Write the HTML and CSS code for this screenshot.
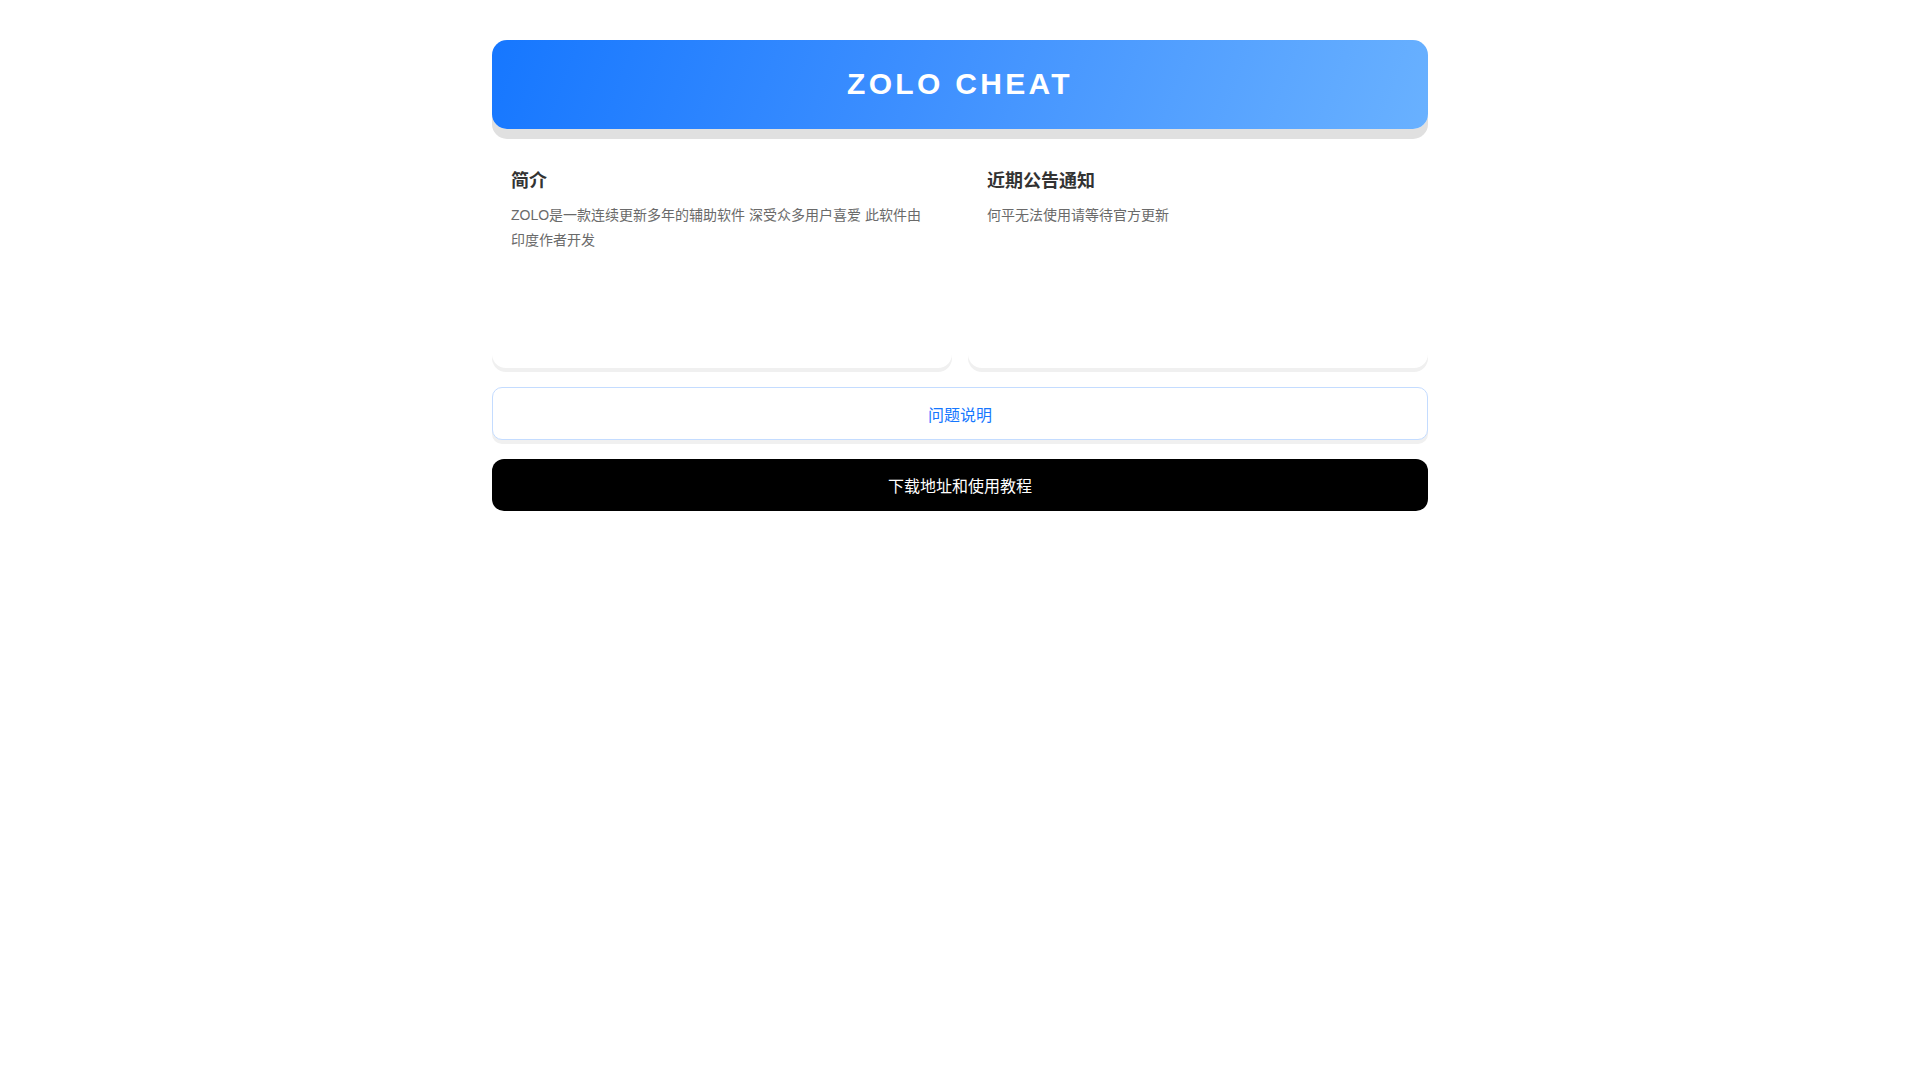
FILE: index.html
```html
<!DOCTYPE html>
<html lang="zh-CN">
<head>
<meta charset="utf-8">
<title>ZOLO CHEAT</title>
<link rel="stylesheet" href="styles.css">
</head>
<body>
<div class="page">
  <header class="hero">
    <h1 class="hero-title">ZOLO CHEAT</h1>
  </header>

  <section class="cards">
    <article class="card">
      <h3 class="card-title">简介</h3>
      <p class="card-text">ZOLO是一款连续更新多年的辅助软件 深受众多用户喜爱 此软件由印度作者开发</p>
    </article>
    <article class="card">
      <h3 class="card-title">近期公告通知</h3>
      <p class="card-text">何平无法使用请等待官方更新</p>
    </article>
  </section>

  <a class="btn btn-outline" href="#">问题说明</a>
  <a class="btn btn-dark" href="#">下载地址和使用教程</a>
</div>
</body>
</html>
```

FILE: styles.css
```css
* {
  box-sizing: border-box;
}

html, body {
  margin: 0;
  padding: 0;
  background: #ffffff;
}

body {
  font-family: "Liberation Sans", "Noto Sans CJK SC", sans-serif;
  color: #333333;
}

.page {
  width: 936px;
  margin: 0 auto;
  padding-top: 40px;
  display: flex;
  flex-direction: column;
}

.hero {
  height: 89px;
  padding-bottom: 2px;
  border-radius: 15px;
  background: linear-gradient(110deg, #1677ff 0%, #3d8fff 45%, #69b1ff 100%);
  box-shadow: 0 10px 0 #e0e0e0;
  display: flex;
  align-items: center;
  justify-content: center;
}

.hero-title {
  margin: 0;
  color: #ffffff;
  font-family: "Liberation Sans", Arial, sans-serif;
  font-weight: 700;
  font-size: 30px;
  letter-spacing: 3.3px;
  line-height: 1;
}

.cards {
  margin-top: 20px;
  display: grid;
  grid-template-columns: 1fr 1fr;
  gap: 16px;
}

.card {
  min-height: 219px;
  padding: 19px 20px 20px 19px;
  background: #ffffff;
  border-radius: 14px;
  box-shadow: 0 4px 0 #f0f0f0;
}

.card-title {
  margin: 0 0 9px;
  font-size: 18px;
  font-weight: 700;
  color: #333333;
  line-height: 26px;
}

.card-text {
  margin: 0;
  font-size: 14px;
  line-height: 25px;
  color: #6a6a6a;
}

.btn {
  display: flex;
  align-items: center;
  justify-content: center;
  text-decoration: none;
  font-size: 16px;
}

.btn-outline {
  margin-top: 19px;
  height: 53px;
  border: 1px solid #c4dcff;
  border-radius: 10px;
  background: #ffffff;
  color: #1677ff;
  box-shadow: 0 4px 0 #f0f0f0;
}

.btn-dark {
  margin-top: 19px;
  height: 52px;
  border-radius: 12px;
  background: #000000;
  color: #ffffff;
}
```
